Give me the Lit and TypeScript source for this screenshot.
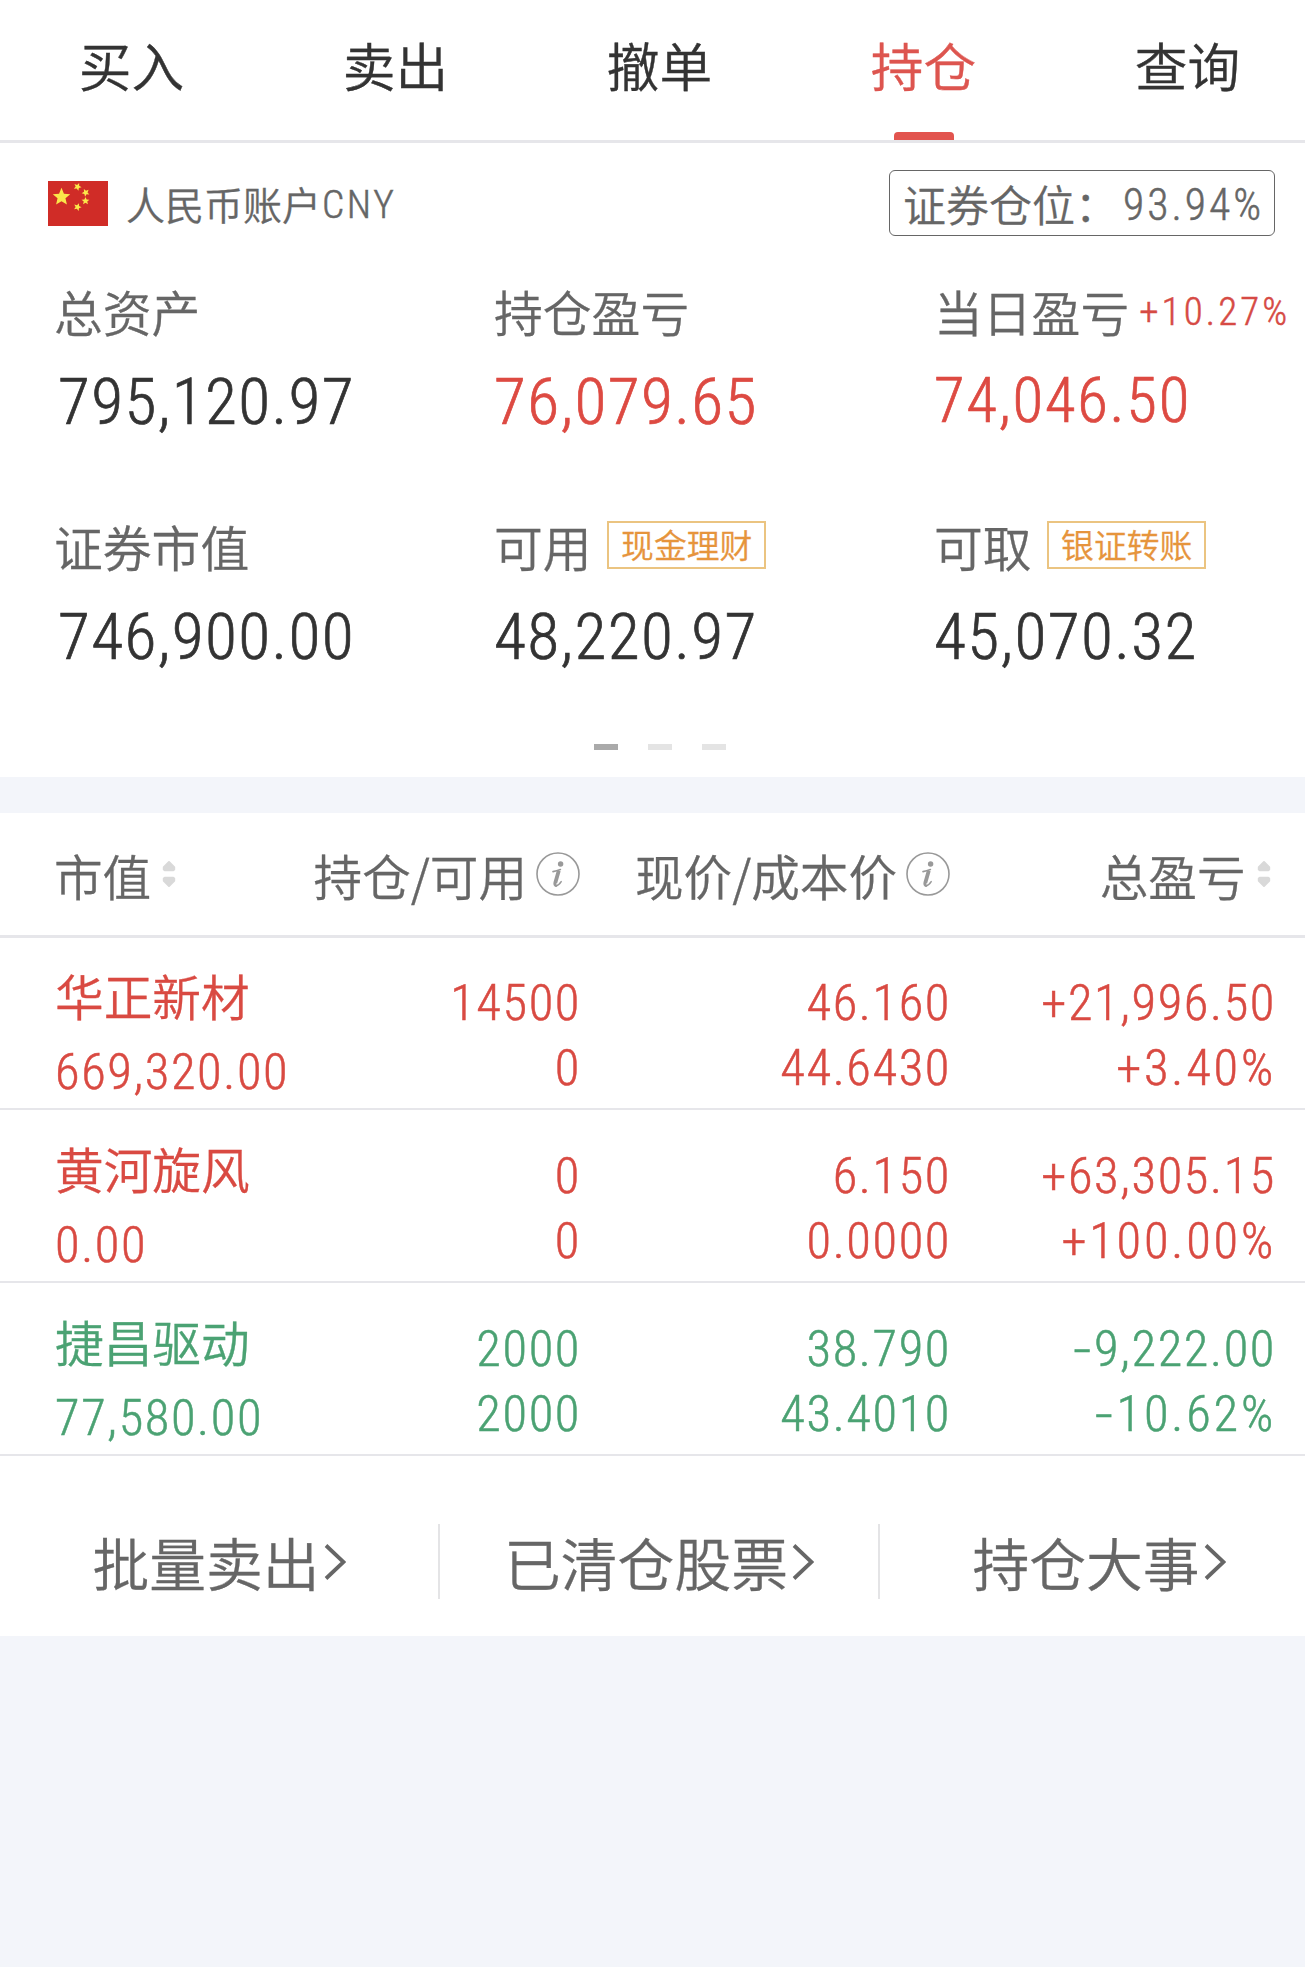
import { LitElement, html, css, svg, nothing } from "lit";
import { customElement, property } from "lit/decorators.js";
import { classMap } from "lit/directives/class-map.js";

interface Metric {
  label: string;
  value: string;
  tone?: "up";
  compact?: boolean;
  rate?: string;
  tag?: string;
}

interface Holding {
  name: string;
  marketValue: string;
  amount: string;
  available: string;
  price: string;
  cost: string;
  profit: string;
  profitRate: string;
  tone: "up" | "down";
}

const TABS = ["买入", "卖出", "撤单", "持仓", "查询"];
const ACTIVE_TAB = "持仓";

const METRICS: Metric[] = [
  { label: "总资产", value: "795,120.97" },
  { label: "持仓盈亏", value: "76,079.65", tone: "up" },
  { label: "当日盈亏", value: "74,046.50", tone: "up", compact: true, rate: "+10.27%" },
  { label: "证券市值", value: "746,900.00" },
  { label: "可用", value: "48,220.97", tag: "现金理财" },
  { label: "可取", value: "45,070.32", tag: "银证转账" },
];

const HOLDINGS: Holding[] = [
  {
    name: "华正新材", marketValue: "669,320.00", amount: "14500", available: "0",
    price: "46.160", cost: "44.6430", profit: "+21,996.50", profitRate: "+3.40%", tone: "up",
  },
  {
    name: "黄河旋风", marketValue: "0.00", amount: "0", available: "0",
    price: "6.150", cost: "0.0000", profit: "+63,305.15", profitRate: "+100.00%", tone: "up",
  },
  {
    name: "捷昌驱动", marketValue: "77,580.00", amount: "2000", available: "2000",
    price: "38.790", cost: "43.4010", profit: "-9,222.00", profitRate: "-10.62%", tone: "down",
  },
];

const ACTIONS = ["批量卖出", "已清仓股票", "持仓大事"];

const STAR = "0,-1 .265,-.365 .951,-.309 .43,.14 .588,.809 0,.45 -.588,.809 -.43,.14 -.951,-.309 -.265,-.365";

const star = (x: number, y: number, r: number, angle = 0) =>
  svg`<polygon points=${STAR} fill="#fbe74a" transform="translate(${x} ${y}) rotate(${angle}) scale(${r})"></polygon>`;

const flagIcon = html`
  <svg width="60" height="45" viewBox="0 0 60 45">
    <rect width="60" height="45" fill="#d02c27"></rect>
    ${star(13.5, 16, 9.2)}
    ${star(29.5, 5.7, 4.1, 24)}
    ${star(37.7, 11.7, 4.1, 45)}
    ${star(37.5, 20, 4.1)}
    ${star(29.5, 26, 4.1, 20)}
  </svg>`;

const sortIcon = html`
  <svg class="sort" width="14" height="28" viewBox="0 0 14 28">
    <path d="M7 2 12.2 7.2V9.5L11.2 10.3H2.8L1.8 9.5V7.2Z" fill="#d9d9d9" stroke="#d9d9d9" stroke-width="2" stroke-linejoin="round"></path>
    <path d="M7 26 12.2 20.8V18.5L11.2 17.7H2.8L1.8 18.5V20.8Z" fill="#d9d9d9" stroke="#d9d9d9" stroke-width="2" stroke-linejoin="round"></path>
  </svg>`;

const infoIcon = html`
  <svg class="info" width="44" height="44" viewBox="0 0 44 44">
    <circle cx="22" cy="22" r="21" fill="none" stroke="#999" stroke-width="1.6"></circle>
    <circle cx="24.6" cy="12" r="2.7" fill="#999"></circle>
    <path d="M17 19.6Q20.5 19 24.4 17.6" fill="none" stroke="#999" stroke-width="1.6" stroke-linecap="round"></path>
    <path d="M22.8 18.6 19.4 30.4Q18.8 33.2 20.6 33" fill="none" stroke="#999" stroke-width="3.8"></path>
    <path d="M19.8 34Q22.6 33.6 25.2 29.6" fill="none" stroke="#999" stroke-width="1.5" stroke-linecap="round"></path>
  </svg>`;

const chevron = html`
  <svg class="chevron" width="22" height="36" viewBox="0 0 22 36">
    <path d="M2 1.5 19.5 18 2 34.5" fill="none" stroke="#666" stroke-width="3.8"></path>
  </svg>`;

@customElement("trade-tabs")
class TradeTabs extends LitElement {
  static styles = css`
    :host { display: block; overflow: hidden; border-bottom: 3px solid #e6e6ea; }
    .tabs { display: grid; grid-template-columns: repeat(5, 264px); height: 140px; }
    .tab {
      display: flex; flex-direction: column; align-items: center; justify-content: space-between;
      font-size: 52.7px; line-height: 129px; color: #333; margin-left: -.5px; margin-right: .5px;
      -webkit-text-stroke: .4px currentColor;
    }
    .active { color: #dd554f; }
    .bar { width: 60px; height: 8px; border-radius: 4px 4px 0 0; background: #e2544e; }
  `;
  render() {
    return html`<div class="tabs">
      ${TABS.map((t) => html`
        <div class=${classMap({ tab: true, active: t === ACTIVE_TAB })}>
          <span>${t}</span>${t === ACTIVE_TAB ? html`<i class="bar"></i>` : nothing}
        </div>`)}
    </div>`;
  }
}

@customElement("account-summary")
class AccountSummary extends LitElement {
  static styles = css`
    :host { display: block; overflow: hidden; padding-bottom: 27px; background: #fff; -webkit-text-stroke: .3px currentColor; }
    .num {
      font-family: "Roboto Condensed", Roboto, sans-serif; font-stretch: 75%; font-weight: 300;
      -webkit-text-stroke: .5px currentColor;
    }
    .account { display: flex; align-items: center; height: 120px; padding: 0 30px 0 48px; }
    .account svg { display: block; margin-right: 18px; }
    .name { font-size: 39px; color: #666; }
    .cny { font-size: 39.5px; letter-spacing: 2.5px; margin: 3px 0 0 1px; color: #666; }
    .ratio {
      display: flex; align-items: center; box-sizing: border-box; width: 386px; height: 66px;
      margin-left: auto; padding-left: 13px; border: 1.5px solid #666; border-radius: 6px;
      font-size: 43px; color: #666; white-space: nowrap;
    }
    .ratio .num { font-size: 43.6px; letter-spacing: 3px; margin: 4px 0 0 5px; }
    .metrics { display: grid; grid-template-columns: 440px 440px 371px; row-gap: 51px; padding-left: 54px; }
    .label { display: flex; align-items: center; height: 94px; font-size: 48.8px; color: #666; white-space: nowrap; }
    .rate { margin: 4px 0 0 10px; font-size: 39px; letter-spacing: 3.1px; color: #d64a44; }
    .tag {
      box-sizing: border-box; height: 48px; margin: 0 0 0 15.5px; padding: 0 12px;
      border: 2px solid #ebc481; font-size: 32.8px; line-height: 41px; color: #e6943c;
    }
    .value {
      height: 90px; padding-left: 4px; font-size: 65.6px; line-height: 89px; letter-spacing: 1.35px;
      color: #333; -webkit-text-stroke: .7px currentColor;
    }
    .value.inset { padding-left: 0; }
    .value.up { color: #dd4a42; }
    .value.compact { font-size: 63px; line-height: 87px; letter-spacing: 1.7px; }
    .dots { display: flex; justify-content: center; gap: 30px; margin: 62px 0 0 15px; }
    .dot { width: 24px; height: 6px; background: #e4e4e4; }
    .dot.on { background: #aaa; }
  `;
  render() {
    return html`
      <div class="account">
        ${flagIcon}
        <span class="name">人民币账户</span><span class="cny num">CNY</span>
        <div class="ratio"><span>证券仓位：</span><span class="num">93.94%</span></div>
      </div>
      <div class="metrics">
        ${METRICS.map((m, i) => html`
          <div>
            <div class="label">
              <span>${m.label}</span>
              ${m.rate ? html`<span class="rate num">${m.rate}</span>` : nothing}
              ${m.tag ? html`<span class="tag">${m.tag}</span>` : nothing}
            </div>
            <div class=${classMap({ value: true, num: true, inset: i % 3 !== 0, up: m.tone === "up", compact: !!m.compact })}>${m.value}</div>
          </div>`)}
      </div>
      <div class="dots"><i class="dot on"></i><i class="dot"></i><i class="dot"></i></div>`;
  }
}

@customElement("holding-row")
class HoldingRow extends LitElement {
  @property({ attribute: false }) holding!: Holding;
  static styles = css`
    :host { display: block; border-bottom: 2px solid #e6e6ea; -webkit-text-stroke: .3px currentColor; }
    .row {
      display: grid; grid-template-columns: 241px 285px 370px 325px; box-sizing: border-box;
      height: 171px; padding-left: 55px; white-space: nowrap;
    }
    .up { color: #d94a42; }
    .down { color: #4ba273; }
    .first { padding-top: 19.5px; }
    .name { font-size: 48.7px; line-height: 77px; }
    .num {
      font-family: "Roboto Condensed", Roboto, sans-serif; font-stretch: 75%; font-weight: 300;
      font-size: 50.5px; letter-spacing: 1.6px; line-height: 65px; -webkit-text-stroke: .5px currentColor;
    }
    .first .num { line-height: 75px; }
    .pair { padding-top: 32.5px; text-align: right; }
    .rate { letter-spacing: 2.8px; }
    .minus { display: inline-block; transform: scaleX(1.45); margin-right: 3px; }
  `;
  private signed(v: string) {
    return v.startsWith("-") ? html`<span class="minus">-</span>${v.slice(1)}` : v;
  }
  private pair(a: string, b: string) {
    return html`<div class="pair">
      <div class="num">${this.signed(a)}</div>
      <div class=${classMap({ num: true, rate: b.endsWith("%") })}>${this.signed(b)}</div>
    </div>`;
  }
  render() {
    const h = this.holding;
    return html`
      <div class=${classMap({ row: true, [h.tone]: true })}>
        <div class="first"><div class="name">${h.name}</div><div class="num">${h.marketValue}</div></div>
        ${this.pair(h.amount, h.available)} ${this.pair(h.price, h.cost)} ${this.pair(h.profit, h.profitRate)}
      </div>`;
  }
}

@customElement("holdings-table")
class HoldingsTable extends LitElement {
  static styles = css`
    :host { display: block; background: #fff; }
    .head {
      display: grid; grid-template-columns: 241px 285px 370px 325px; height: 122px; padding-left: 54px;
      font-size: 48.6px; color: #666; white-space: nowrap; -webkit-text-stroke: .3px currentColor;
    }
    .head span { padding-top: 2px; }
    .line { height: 3px; background: #e6e6ea; }
    .cell { display: flex; align-items: center; justify-content: flex-end; }
    .cell:first-child { justify-content: flex-start; }
    .sort { margin: 0 4px 0 11px; }
    .cell:last-child .sort { margin-right: 4.5px; }
    .info { margin-left: 9px; }
    .rows { margin-top: -1px; }
  `;
  render() {
    return html`
      <div class="head">
        <div class="cell"><span>市值</span>${sortIcon}</div>
        <div class="cell"><span>持仓/可用</span>${infoIcon}</div>
        <div class="cell"><span>现价/成本价</span>${infoIcon}</div>
        <div class="cell"><span>总盈亏</span>${sortIcon}</div>
      </div>
      <div class="line"></div>
      <div class="rows">${HOLDINGS.map((h) => html`<holding-row .holding=${h}></holding-row>`)}</div>`;
  }
}

@customElement("action-links")
class ActionLinks extends LitElement {
  static styles = css`
    :host { display: block; overflow: hidden; background: #fff; }
    .links { display: grid; grid-template-columns: repeat(3, 440px); height: 75px; padding: 68px 0 37px; }
    .link {
      display: flex; align-items: center; justify-content: center; box-sizing: border-box;
      font-size: 56.8px; line-height: 75px; color: #666; white-space: nowrap; border-right: 2px solid #e4e4e6;
      -webkit-text-stroke: .3px currentColor;
    }
    .chevron { margin-left: 4px; }
  `;
  render() {
    return html`<div class="links">
      ${ACTIONS.map((a) => html`<div class="link"><span>${a}</span>${chevron}</div>`)}
    </div>`;
  }
}

@customElement("app-root")
class AppRoot extends LitElement {
  static styles = css`
    :host {
      display: block; width: 100%; min-height: 1967px; overflow: hidden; background: #f3f5fa;
      font-family: "Noto Sans CJK SC", sans-serif; font-weight: 350;
    }
    .top { background: #fff; }
    .gap { height: 36px; }
  `;
  render() {
    return html`
      <div class="top"><trade-tabs></trade-tabs><account-summary></account-summary></div>
      <div class="gap"></div>
      <holdings-table></holdings-table>
      <action-links></action-links>`;
  }
}
